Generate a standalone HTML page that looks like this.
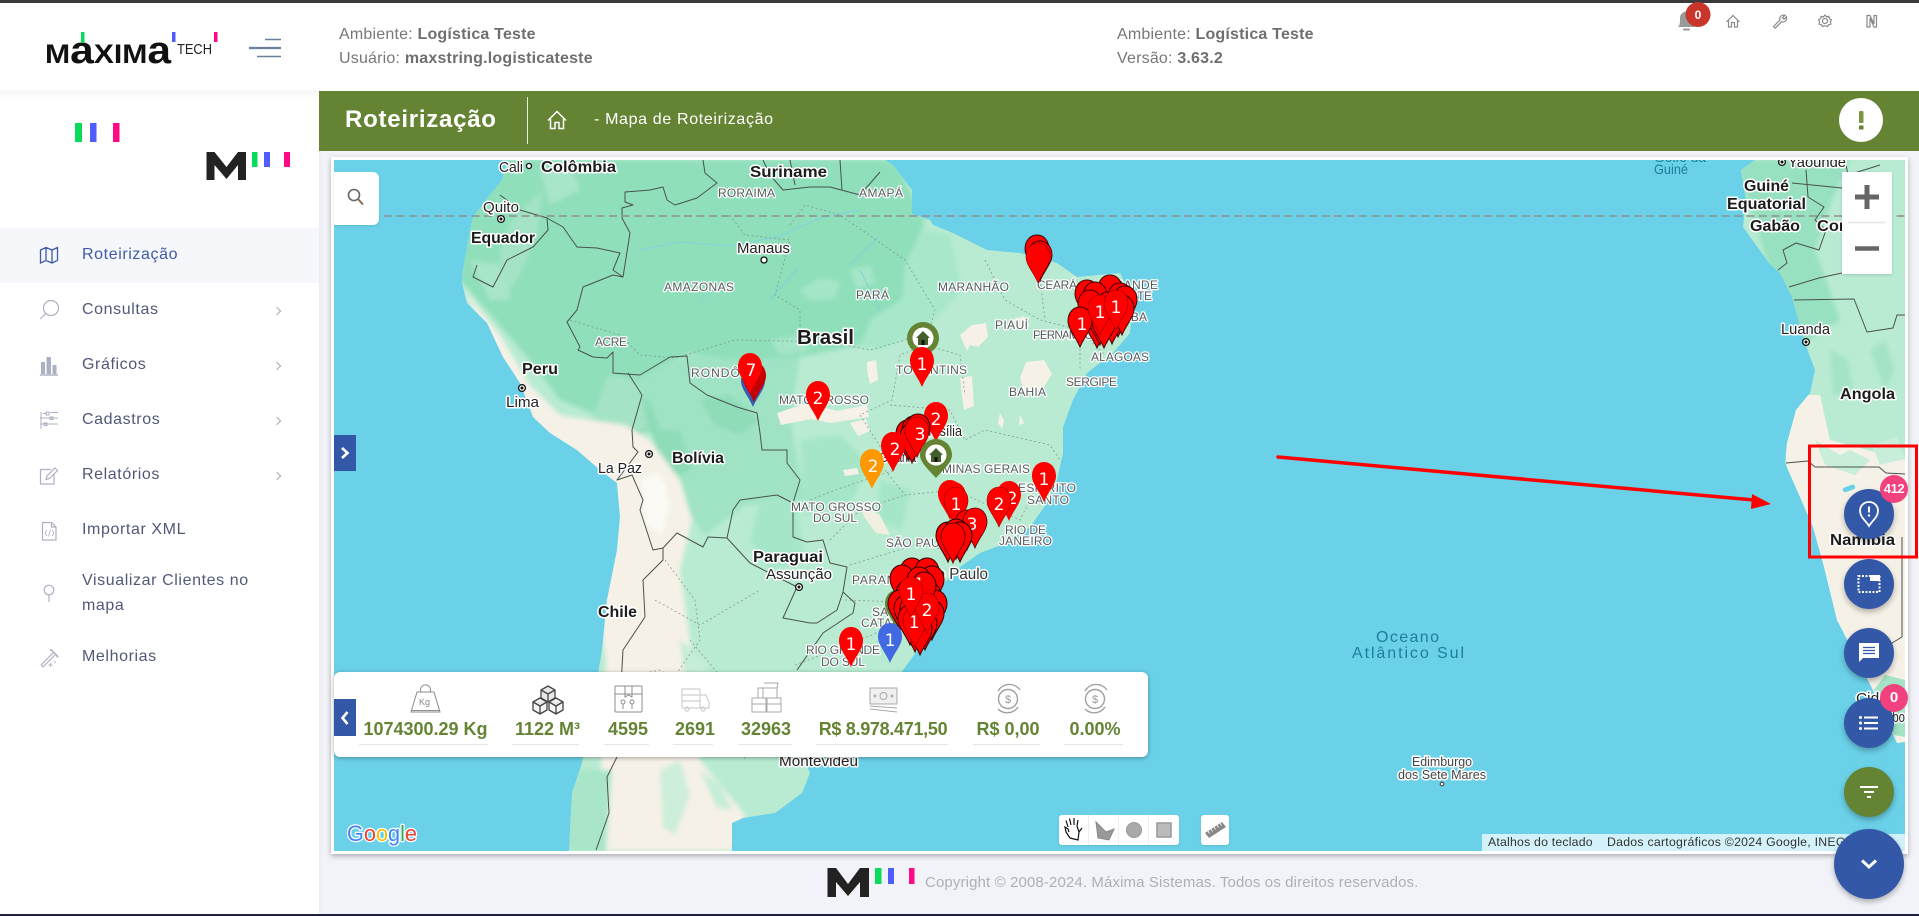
<!DOCTYPE html>
<html lang="pt-BR">
<head>
<meta charset="utf-8">
<title>Roteirização - Mapa de Roteirização</title>
<style>
*{box-sizing:border-box;margin:0;padding:0}
html,body{width:1919px;height:916px;overflow:hidden;background:#f1f3f9;font-family:"Liberation Sans",sans-serif}
.abs,.abs>*{position:absolute}
#top{left:0;top:0;width:1919px;height:91px;background:#fff;border-top:3px solid #3a3a3c}
#bottom{left:0;top:914px;width:1919px;height:2px;background:#1f2143}
#side{left:0;top:91px;width:319px;height:823px;background:#fff;box-shadow:inset 0 8px 8px -6px rgba(0,0,0,.06),2px 0 5px rgba(0,0,0,.03)}
.m{position:absolute;left:82px;font-size:16px;color:#515878;letter-spacing:.6px;white-space:nowrap;line-height:20px}
.chev{position:absolute;left:274px;width:6px;height:6px;border-top:1px solid #a5a8b5;border-right:1px solid #a5a8b5;transform:rotate(45deg)}
.h{position:absolute;font-size:16px;color:#777;white-space:nowrap;line-height:20px;letter-spacing:.2px}
.h b{color:#6f6f6f}
#bar{left:319px;top:91px;width:1600px;height:60px;background:#648434}
.white-frame{position:absolute;left:331px;top:157px;width:1577px;height:697px;background:#fff;box-shadow:0 2px 5px rgba(0,0,0,.3)}
#map{position:absolute;left:334px;top:160px;width:1571px;height:691px;overflow:hidden}
.lb{font-family:"Liberation Sans",sans-serif;paint-order:stroke;stroke:#fff;stroke-width:3px;stroke-linejoin:round;fill:#222;font-size:15px}
.bd{font-weight:700;font-size:16px;fill:#1c1c1c}
.st{font-size:12px;fill:#555b5d;stroke-width:2.5px}
.oc{fill:#1b7f9d;stroke:none;font-size:16px}
.n{font-family:"DejaVu Sans",sans-serif;font-size:17px;fill:#fff;text-anchor:middle}
.box{position:absolute;background:#fff}
#panel{position:absolute;left:334px;top:672px;width:814px;height:85px;background:#fff;border-radius:6px;box-shadow:0 1px 4px rgba(0,0,0,.35)}
.v{position:absolute;top:719px;height:20px;line-height:20px;font-size:18px;font-weight:700;color:#648434;white-space:nowrap;text-align:center}
.u{position:absolute;top:744px;height:1px;background:#e6e6e6}
.fab{position:absolute;border-radius:50%;background:#3458a8;box-shadow:0 3px 6px rgba(0,0,0,.28);display:flex;align-items:center;justify-content:center}
.bdg{position:absolute;width:28px;height:28px;border-radius:50%;background:#f2417f;color:#fff;font-weight:700;font-size:14px;line-height:28px;text-align:center}
.attr{position:absolute;top:834px;height:17px;background:rgba(255,255,255,.7);font-size:12.3px;line-height:17px;color:#333;white-space:nowrap}
</style>
</head>
<body>
<div id="top" style="position:absolute"></div>

<!-- header logo -->
<svg style="position:absolute;left:0;top:0" width="320" height="91" viewBox="0 0 320 91">
<text x="45" y="63" font-family="Liberation Sans" font-weight="700" font-size="27" fill="#111" textLength="126" lengthAdjust="spacingAndGlyphs">M<tspan font-size="38">a</tspan>XIM<tspan font-size="38">a</tspan></text>
<rect x="81" y="32" width="3.5" height="11" fill="#0adb5c"/>
<rect x="172" y="32" width="3.5" height="10" fill="#4f5cff"/>
<rect x="214" y="32" width="3.5" height="10" fill="#ff0a84"/>
<text x="177" y="54" font-family="Liberation Sans" font-size="15" fill="#222" textLength="35" lengthAdjust="spacingAndGlyphs">TECH</text>
<path d="M265 39.500H281M257 56.500H281" stroke="#6b8096" stroke-width="1.500" fill="none"/>
<path d="M249 48H281" stroke="#6b8096" stroke-width="2.200"/>
</svg>
<div class="h" style="left:339px;top:25px">Ambiente: <b>Logística Teste</b></div>
<div class="h" style="left:339px;top:49px">Usuário: <b>maxstring.logisticateste</b></div>
<div class="h" style="left:1117px;top:25px">Ambiente: <b>Logística Teste</b></div>
<div class="h" style="left:1117px;top:49px">Versão: <b>3.63.2</b></div>

<!-- top icons -->
<svg style="position:absolute;left:1660px;top:0" width="230" height="40" viewBox="1660 0 230 40">
<path d="M1678 27c2-2 2-4 2-9a6.500 6.500 0 0 1 13 0c0 5 0 7 2 9z" fill="#9a9a9a"/><rect x="1683" y="28.500" width="7" height="2" rx="1" fill="#9a9a9a"/>
<circle cx="1698" cy="14.500" r="12.500" fill="#c8352a"/>
<text x="1698" y="19" font-family="Liberation Sans" font-weight="700" font-size="12" fill="#fff" text-anchor="middle">0</text>
<g fill="none" stroke="#8a8a8a" stroke-width="1.200">
<path d="M1726.500 22L1733 15.500L1739.500 22M1728.500 20.500V27H1731.500V22.500H1734.500V27H1737.500V20.500"/>
<path d="M1773.500 26.500L1780 20c-1-3 1.500-5.500 5-4.800l-2.500 2.500 1.500 1.500 2.500-2.500c.7 3.500-1.800 6-4.800 5l-6.500 6.500z"/>
<circle cx="1825" cy="21" r="2.500"/><path d="M1825 15l1.500 1.800 2.300-.5.700 2.200 2 1.500-1.200 1.700.7 2.300-2.300.5-1.200 2-2.500-.8-2.500.8-1.200-2-2.300-.5.700-2.300-1.200-1.700 2-1.500.7-2.200 2.300.5z"/>
<path d="M1867 15.500H1870L1874 24V15.500H1876.500V27H1874L1870 18V27H1867Z"/>
</g>
</svg>

<!-- sidebar -->
<div id="side" style="position:absolute"></div>
<div style="position:absolute;left:0;top:228px;width:319px;height:55px;background:#f6f7fa"></div>
<svg style="position:absolute;left:0;top:91px" width="319" height="600" viewBox="0 91 319 600">
<rect x="75" y="123" width="7" height="19" fill="#0adb5c"/><rect x="90" y="123" width="6.500" height="19" fill="#4f5cff"/><rect x="113" y="123" width="6.500" height="19" fill="#ff0a84"/>
<path d="M206.500 180V152H214.500L226.500 167L238 152H246V180H238V165L226.500 179L214.500 165V180Z" fill="#222"/>
<rect x="252" y="152" width="5.500" height="15" fill="#0adb5c"/><rect x="264" y="152" width="6" height="15" fill="#4f5cff"/><rect x="284" y="152" width="6" height="15" fill="#ff0a84"/>
<path d="M40.500 250L46 247.500L52 250L57.500 247.500V260.500L52 263L46 260.500L40.500 263ZM46 247.500V260.500M52 250V263" fill="none" stroke="#3f5aa8" stroke-width="1.300"/>
<g fill="none" stroke="#adb0c4" stroke-width="1.200">
<circle cx="51" cy="308" r="7.500"/><path d="M45.500 313.500L40.500 319"/>
<path d="M40 375H58" stroke-width="1.500"/>
<path d="M50 412.500H58M40 418H58M40 424H58M41 412V429M43 413.500H47M46 412h3v3h-3zM50 417h3v2.500h-3zM44 423h3v2.500h-3z" stroke-width="1"/>
<path d="M54 474V484H40.500V469.500H51"/><path d="M46 479.500L47 476L55 468L57.500 470.500L49.500 478.500Z"/>
<path d="M42.500 522.500H51.500L56 527V540H42.500ZM51.500 522.500V527H56"/><path d="M47 530L45 533L47 536M52 530L54 533L52 536M50.500 529.500L48.500 536.500" stroke-width=".8"/>
<circle cx="49" cy="590" r="4.800"/><path d="M49 595V602"/>
<path d="M41 665L53 653M43 667L55 655M41 665L43 667M52 651l5 5M50 651l1-1.500 7 7-1.500 1"/><path d="M50.500 663v4M48.500 665h4M55 661v2" stroke-width=".9"/>
</g>
<g fill="#adb0c4"><rect x="41" y="362" width="4" height="12"/><rect x="46.500" y="357" width="4.500" height="17"/><rect x="52.500" y="365" width="4" height="9"/></g>
</svg>
<div class="m" style="top:245px;color:#3f5aa8">Roteirização</div>
<div class="m" style="top:300px">Consultas</div>
<div class="m" style="top:355px">Gráficos</div>
<div class="m" style="top:410px">Cadastros</div>
<div class="m" style="top:465px">Relatórios</div>
<div class="m" style="top:520px">Importar XML</div>
<div class="m" style="top:571px">Visualizar Clientes no</div>
<div class="m" style="top:596px">mapa</div>
<div class="m" style="top:647px">Melhorias</div>
<span class="chev" style="top:308px"></span><span class="chev" style="top:363px"></span><span class="chev" style="top:418px"></span><span class="chev" style="top:473px"></span>

<!-- green bar -->
<div id="bar" style="position:absolute"></div>
<div style="position:absolute;left:345px;top:105px;font-size:24px;line-height:30px;font-weight:700;color:#fff;white-space:nowrap;letter-spacing:.75px">Roteirização</div>
<div style="position:absolute;left:527px;top:97px;width:1px;height:47px;background:#e5ecd8"></div>
<svg style="position:absolute;left:546px;top:109px" width="22" height="22" viewBox="546 109 22 22"><path d="M548 120.500L557 111.500L566 120.500M550.500 119V128.500H555V122.500H559V128.500H563.500V119" fill="none" stroke="#fff" stroke-width="1.500"/></svg>
<div style="position:absolute;left:594px;top:110px;font-size:16px;line-height:20px;color:#fff;white-space:nowrap;letter-spacing:.65px">- Mapa de Roteirização</div>
<div style="position:absolute;left:1839px;top:98px;width:44px;height:44px;border-radius:50%;background:#fff"></div>
<svg style="position:absolute;left:1855px;top:108px" width="12" height="24" viewBox="0 0 12 24"><rect x="4" y="3" width="4.500" height="12" rx="1" fill="#7a9440"/><rect x="4" y="17.500" width="4.500" height="4" fill="#648434"/></svg>

<!-- map -->
<div class="white-frame"></div>
<div id="map">
<svg width="1571" height="691" viewBox="334 160 1571 691" style="display:block">
<defs>
<path id="p" d="M0 0C-7 0-12 6-12 14C-12 22-4 30 0 40C4 30 12 22 12 14C12 6 7 0 0 0Z"/>
<clipPath id="sa"><path d="M507 160L502 180L490 195L473 217L470 230L467 247L463 270L462 283L467 303L487 323L503 357L520 383L533 417L550 433L577 450L600 470L617 483L620 517L617 550L607 600L602 650L590 720L582 763L572 793L569 851L732 851L732 823L743 818L775 813L802 793L810 773L800 750L830 740L880 700L903 670L920 647L940 610L940 587L960 567L980 553L1007 543L1030 527L1047 503L1057 480L1063 453L1063 427L1073 400L1087 373L1113 353L1130 333L1133 300L1120 273L1077 277L1057 263L1020 253L987 250L953 233L933 225L930 220L912 214L912 190L893 165L885 160Z"/></clipPath>
<clipPath id="af"><path d="M1755 160L1741 170L1746 200L1743 227L1769 263L1780 273L1792 297L1805 343L1815 370L1810 393L1796 410L1787 443L1785 463L1800 497L1813 527L1823 563L1837 620L1873 690L1897 743L1905 742L1905 160Z"/></clipPath>
<filter id="soft" x="-5%" y="-5%" width="110%" height="110%"><feGaussianBlur stdDeviation="2.500"/></filter>
</defs>
<rect x="334" y="160" width="1571" height="691" fill="#6ad1e8"/>

<g clip-path="url(#sa)">
<rect x="334" y="160" width="900" height="691" fill="#b8ebd2"/>
<g filter="url(#soft)">
<path d="M640 378L690 355L800 355L790 420L805 500L745 505L705 535L680 500L662 430L610 420Z" fill="#9fe3c4"/>
<path d="M902 225L950 235L962 290L925 330L880 350L855 345L870 318L905 265Z" fill="#a8e7ca"/>
<path d="M800 440l40-5 30 30-20 40-45 10zM760 500l35 0 10 60-35 10-20-30zM880 480l30 10-8 40-25-10z" fill="#a6e6c8"/>
<path d="M500 160H895L925 222L905 265L902 300L872 318L860 345L800 357L740 360L690 353L640 378L642 420L610 420L560 400L530 360L495 320L460 280L465 210Z" fill="#8fdfba"/>
<path d="M620 395l30 5 10 30-25 5zM700 400l30-5 30 25-20 15-25-10zM650 430l30 0 12 40-25 10z" fill="#8fdcb8"/>
<path d="M800 290l20-12 20 4-5 16-25 3zM850 270l20-5 5 18-18 6zM770 340l30-5 10 15-30 5z" fill="#a5e6c8"/>
<path d="M500 250l12-30 30-30-4 40-14 36-20 35zM590 425l18-50 30 5 10 50z" fill="#a4e3c5"/>
<path d="M540 170l30-5 10 25-30 15zM470 260l30 5 10 35-20 0z" fill="#a9e5c9"/>
<!-- beige south / west coast -->
<path d="M460 285L500 335L530 385L560 415L590 420L625 425L650 440L680 480L692 520L680 570L690 640L700 700L700 760L745 815L732 851L606 851L600 790L606 660L590 560L610 500L560 470Z" fill="#f5f1e6"/>
<path d="M640 480l18-6 12 30-8 30-16-10zM655 470l12 18-8 18-14-12z" fill="#fbfaf5"/>
<path d="M565 770L612 770L606 851L565 851Z" fill="#a9e6c9"/>
<path d="M660 770l20-10 10 35-15 40-12-8z" fill="#cdeeda"/>
<path d="M680 640l25 20 15 50-15 10-20-40zM700 770l20 15 12 25-15-2z" fill="#c5edd7"/>
</g>
<!-- beige spots Brazil -->
<path d="M960 335l12-10 14-2 2 14-10 10-8-2-3 6zM1020 378l6-16 18-2 8 14-10 16-18 2zM960 378l12-2 2 30-10 4-2-14zM867 362l9-2 2 20-8 4-3-14zM777 413l30-10 30 8 30-6 2 12-38 6-20-4-30 6zM850 423l16-4 4 12-12 5zM843 470l14-2 2 6-14 2zM1000 413l4 8-2 8-4-6zM1020 415l4 8-5 2z" fill="#f5f1e6"/>
<path d="M860 505l20 10 10 20-14-2-12-16zM1010 320l14-4 6 10-16 4z" fill="#f0efe0"/>
<path d="M640 250l40-8 50 4 50-10 40-18 40-8M700 300l20-14M770 300l28-32M850 265l30-30M860 270l20 40" stroke="#7fd5dc" stroke-width="1" fill="none"/>
</g>
<g clip-path="url(#af)">
<rect x="1730" y="160" width="180" height="600" fill="#b8ebd2"/>
<g filter="url(#soft)">
<path d="M1735 160H1850L1830 205L1815 250L1840 320L1800 345L1770 270Z" fill="#98e1c0"/>
<path d="M1870 350l15-10 10 30-10 20zM1830 350l18 10 5 30-20 5z" fill="#a4e3c5"/>
</g>
<path d="M1780 395L1820 395L1830 440L1905 460L1905 760L1860 700L1820 600L1790 500Z" fill="#f5f1e6"/>
<path d="M1815 440l25 15 10-5 20 10-15 15-30-10zM1872 445l25-8 8 22-25 6z" fill="#c8eeda"/>
<path d="M1874 690l20 45 11 2V680l-20-5z" fill="#a4e3c5"/>
<rect x="1843" y="486" width="13" height="5" rx="2.500" fill="#6ad1e8" transform="rotate(-20 1849 490)"/>
</g>

<!-- dashed state borders -->
<g fill="none" stroke="#7d8a85" stroke-width=".9" stroke-dasharray="2 2.500" opacity=".75">
<path d="M570 320L620 335L640 355L675 358L735 340L830 342L870 350L905 340L925 325"/>
<path d="M730 215L745 235L790 240L775 295L800 310L800 330M790 225L805 205L840 215L905 260L935 310L925 345"/>
<path d="M925 345L900 355L892 400L860 415L895 470L835 490L810 500M890 405L950 410L965 440L985 430L1050 445L1060 460"/>
<path d="M985 260L1005 300L1040 320L1080 330L1105 355M1040 280L1045 320M1080 335L1080 370M925 345L960 355L965 395"/>
<path d="M885 470L905 495L955 490L1020 520L1040 480M830 540L860 510L905 495M850 565L915 545L950 550M845 600L900 602M795 665L860 640L895 625"/>
<path d="M665 560L695 600L700 640L665 690L650 700M655 600L700 625L760 590M690 640L740 700L745 760M610 680L660 670L690 690L692 710"/>
</g>
<!-- country borders -->
<g fill="none" stroke="#4a514f" stroke-width="1" stroke-linejoin="round">
<path d="M500 195L520 210L547 218L548 230L533 247L507 260L493 287L473 277L477 265"/>
<path d="M547 218L563 227L577 247L597 248L620 253L613 270L623 277L630 233L622 218L622 208L633 205L625 202L625 192L650 190L663 187L667 200L675 205L697 198L717 183L705 173L703 160"/>
<path d="M623 277L613 275L583 287L577 310L567 322L580 347L578 350L593 357L607 358L613 352L613 373L640 375L670 357L687 356L690 383L707 395L737 407L757 413L760 433L762 450L787 450L787 463L800 480L793 503L793 537L807 542L823 540L830 563L847 567L843 592L855 603L853 613L823 633L797 670"/>
<path d="M628 373L642 395L632 430L633 447L638 452L617 480L632 475L643 500L640 510L653 550L663 548L677 533L703 547L708 537L727 538L733 510L740 500L777 495L793 503"/>
<path d="M727 538L750 563L797 587L783 618L810 623L817 623L837 610L843 592"/>
<path d="M663 548L663 560L643 580L645 617L623 650L617 757L607 777L609 813L596 850"/>
<path d="M763 160L770 175L783 190L810 187L830 187L860 195L880 172M790 160L795 185M840 160L842 190"/>
<path d="M1792 183L1842 188M1806 170L1808 197L1824 207L1815 220L1826 230L1819 250L1796 243L1783 250L1787 263L1778 270M1789 287L1819 278L1842 273M1794 300L1854 299L1867 332L1893 328L1897 315L1905 315M1845 160L1848 175L1880 165M1786 463L1808 461L1815 467L1879 467L1886 473L1905 474M1902 537V637L1892 643L1885 650"/>
</g>
<path d="M334 216H1905" stroke="#8f8f8f" stroke-width="1.600" stroke-dasharray="8 4.500"/>

<!-- markers -->
<g fill="#fff" stroke="#111" stroke-width="1.300">
<circle cx="529" cy="166" r="2.500"/><circle cx="764" cy="260" r="3"/><circle cx="1442" cy="784" r="1.800" stroke="#555"/>
<circle cx="501" cy="219" r="3.400"/><circle cx="522" cy="388" r="3.400"/><circle cx="649" cy="454" r="3.400"/><circle cx="799" cy="587" r="3.400"/><circle cx="1782" cy="162" r="3.400"/><circle cx="1806" cy="342" r="3.400"/>
</g>
<g fill="#111"><circle cx="501" cy="219" r="1.500"/><circle cx="522" cy="388" r="1.500"/><circle cx="649" cy="454" r="1.500"/><circle cx="799" cy="587" r="1.500"/><circle cx="1782" cy="162" r="1.500"/><circle cx="1806" cy="342" r="1.500"/></g>

<!-- labels -->
<text class="lb" x="499" y="172" textLength="24" lengthAdjust="spacingAndGlyphs" font-size="14">Cali</text>
<text class="lb bd" x="541" y="172" textLength="75" lengthAdjust="spacingAndGlyphs">Colômbia</text>
<text class="lb bd" x="750" y="177" textLength="77" lengthAdjust="spacingAndGlyphs">Suriname</text>
<text class="lb" x="483" y="212" textLength="36" lengthAdjust="spacingAndGlyphs">Quito</text>
<text class="lb bd" x="471" y="243" textLength="64" lengthAdjust="spacingAndGlyphs">Equador</text>
<text class="lb" x="737" y="253" textLength="53" lengthAdjust="spacingAndGlyphs">Manaus</text>
<text class="lb st" x="664" y="291" textLength="70">AMAZONAS</text>
<text class="lb st" x="718" y="197" textLength="57">RORAIMA</text>
<text class="lb st" x="859" y="197" textLength="44">AMAPÁ</text>
<text class="lb st" x="595" y="346" textLength="32">ACRE</text>
<text class="lb bd" x="522" y="374" textLength="36" lengthAdjust="spacingAndGlyphs">Peru</text>
<text class="lb" x="506" y="407" textLength="33" lengthAdjust="spacingAndGlyphs">Lima</text>
<text class="lb" x="598" y="473" textLength="44" lengthAdjust="spacingAndGlyphs">La Paz</text>
<text class="lb bd" x="672" y="463" textLength="52" lengthAdjust="spacingAndGlyphs">Bolívia</text>
<text class="lb bd" x="598" y="617" textLength="39" lengthAdjust="spacingAndGlyphs">Chile</text>
<text class="lb bd" x="753" y="562" textLength="70" lengthAdjust="spacingAndGlyphs">Paraguai</text>
<text class="lb" x="766" y="579" textLength="66" lengthAdjust="spacingAndGlyphs">Assunção</text>
<text class="lb st" x="691" y="377" textLength="72">RONDÔNIA</text>
<text class="lb bd" x="797" y="344" textLength="57" lengthAdjust="spacingAndGlyphs" style="font-size:20px">Brasil</text>
<text class="lb st" x="856" y="299" textLength="33">PARÁ</text>
<text class="lb st" x="938" y="291" textLength="71">MARANHÃO</text>
<text class="lb st" x="995" y="329" textLength="33">PIAUÍ</text>
<text class="lb st" x="1037" y="289" textLength="40">CEARÁ</text>
<text class="lb st" x="1105" y="289" textLength="53">GRANDE</text>
<text class="lb st" x="1112" y="300" textLength="40">NORTE</text>
<text class="lb st" x="1095" y="321" textLength="52">PARAÍBA</text>
<text class="lb st" x="1033" y="339" textLength="76">PERNAMBUCO</text>
<text class="lb st" x="1091" y="361" textLength="58">ALAGOAS</text>
<text class="lb st" x="1066" y="386" textLength="51">SERGIPE</text>
<text class="lb st" x="1009" y="396" textLength="37">BAHIA</text>
<text class="lb st" x="896" y="374" textLength="71">TOCANTINS</text>
<text class="lb st" x="779" y="404" textLength="90">MATO GROSSO</text>
<text class="lb" x="920" y="436" textLength="42" lengthAdjust="spacingAndGlyphs" font-size="14">Brasília</text>
<text class="lb" x="880" y="462" textLength="36" lengthAdjust="spacingAndGlyphs" font-size="14">Goiânia</text>
<text class="lb st" x="942" y="473" textLength="88">MINAS GERAIS</text>
<text class="lb st" x="1018" y="492" textLength="58">ESPÍRITO</text>
<text class="lb st" x="1027" y="504" textLength="42">SANTO</text>
<text class="lb st" x="1005" y="534" textLength="41">RIO DE</text>
<text class="lb st" x="999" y="545" textLength="53">JANEIRO</text>
<text class="lb st" x="791" y="511" textLength="90">MATO GROSSO</text>
<text class="lb st" x="813" y="522" textLength="44">DO SUL</text>
<text class="lb st" x="886" y="547" textLength="70">SÃO PAULO</text>
<text class="lb" x="918" y="579" textLength="70" lengthAdjust="spacingAndGlyphs" style="fill:#333;font-size:16px">São Paulo</text>
<text class="lb st" x="852" y="584" textLength="52">PARANÁ</text>
<text class="lb st" x="872" y="616" textLength="40">SANTA</text>
<text class="lb st" x="861" y="627" textLength="60">CATARINA</text>
<text class="lb st" x="806" y="654" textLength="74">RIO GRANDE</text>
<text class="lb st" x="821" y="666" textLength="44">DO SUL</text>
<text class="lb" x="779" y="766" textLength="79" lengthAdjust="spacingAndGlyphs" font-size="14">Montevideu</text>
<text class="lb oc" x="1376" y="642" textLength="63" lengthAdjust="spacing">Oceano</text>
<text class="lb oc" x="1352" y="658" textLength="112" lengthAdjust="spacing">Atlântico Sul</text>
<text class="lb" x="1412" y="766" textLength="60" lengthAdjust="spacingAndGlyphs" style="font-size:13px;fill:#444">Edimburgo</text>
<text class="lb" x="1398" y="779" textLength="88" lengthAdjust="spacingAndGlyphs" style="font-size:13px;fill:#444">dos Sete Mares</text>
<text class="lb oc" x="1654" y="162" textLength="52" lengthAdjust="spacingAndGlyphs" style="font-size:13px">Golfo da</text>
<text class="lb oc" x="1654" y="174" textLength="34" lengthAdjust="spacingAndGlyphs" style="font-size:14px">Guiné</text>
<text class="lb" x="1788" y="167" textLength="58" lengthAdjust="spacingAndGlyphs">Yaoundé</text>
<text class="lb bd" x="1744" y="191" textLength="45" lengthAdjust="spacingAndGlyphs">Guiné</text>
<text class="lb bd" x="1727" y="209" textLength="79" lengthAdjust="spacingAndGlyphs">Equatorial</text>
<text class="lb bd" x="1750" y="231" textLength="50" lengthAdjust="spacingAndGlyphs">Gabão</text>
<text class="lb bd" x="1817" y="231" textLength="52" lengthAdjust="spacingAndGlyphs">Congo</text>
<text class="lb" x="1781" y="334" textLength="49" lengthAdjust="spacingAndGlyphs">Luanda</text>
<text class="lb bd" x="1840" y="399" textLength="55" lengthAdjust="spacingAndGlyphs">Angola</text>
<text class="lb bd" x="1830" y="545" textLength="65" lengthAdjust="spacingAndGlyphs">Namíbia</text>
<text class="lb" x="1856" y="703" textLength="49" lengthAdjust="spacingAndGlyphs" font-size="14">Cidade</text>
<text class="lb" x="1862" y="722" textLength="43" lengthAdjust="spacingAndGlyphs" font-size="14">do Cabo</text>

<!-- pins -->
<g fill="#f00">
<use href="#p" x="753" y="367" fill="#3a5ab0"/>
<use href="#p" x="754" y="362" fill="#c40000"/>
<use href="#p" x="750" y="353"/><text class="n" x="751" y="376">7</text>
<use href="#p" x="818" y="381"/><text class="n" x="818" y="404">2</text>
<circle cx="923" cy="338" r="16" fill="#648434"/><circle cx="923" cy="338" r="10.500" fill="#fff"/>
<path d="M916 338L923 331L930 338H928V345H918V338Z" fill="#44602a"/><rect x="921.500" y="340" width="3" height="5" fill="#111"/>
<use href="#p" x="922" y="347"/><text class="n" x="922" y="370">1</text>
<use href="#p" x="936" y="402"/><text class="n" x="936" y="425">2</text>
<g stroke="#300" stroke-width="1">
<use href="#p" x="908" y="420"/><use href="#p" x="914" y="416"/><use href="#p" x="918" y="414"/><use href="#p" x="912" y="423"/>
<use href="#p" x="917" y="417" stroke="#a00"/>
</g><text class="n" x="920" y="440">3</text>
<use href="#p" x="893" y="432"/><text class="n" x="895" y="455">2</text>
<use href="#p" x="872" y="449" fill="#ff9800"/><text class="n" x="873" y="472">2</text>
<path d="M936 478C931 472 920 463 920 455a16 16 0 0 1 32 0c0 8-11 17-16 23Z" fill="#648434"/><circle cx="936" cy="455" r="10.500" fill="#fff"/>
<path d="M929 455L936 448L943 455H941V462H931V455Z" fill="#44602a"/><rect x="934.500" y="457" width="3" height="5" fill="#111"/>
<use href="#p" x="1044" y="462"/><text class="n" x="1044" y="485">1</text>
<use href="#p" x="1009" y="481"/><text class="n" x="1012" y="504">2</text>
<use href="#p" x="999" y="487" stroke="#900" stroke-width=".6"/><text class="n" x="999" y="510">2</text>
<use href="#p" x="950" y="480"/><use href="#p" x="954" y="482"/>
<use href="#p" x="956" y="487" stroke="#900" stroke-width=".6"/><text class="n" x="956" y="510">1</text>
<g stroke="#500" stroke-width=".8"><use href="#p" x="967" y="510"/><use href="#p" x="975" y="508"/></g><text class="n" x="972" y="530">3</text>
<g stroke="#200" stroke-width="1"><use href="#p" x="948" y="522"/><use href="#p" x="956" y="519"/><use href="#p" x="960" y="522"/><use href="#p" x="953" y="523" stroke="#700"/></g>
<g stroke="#300" stroke-width=".9"><use href="#p" x="1037" y="235"/><use href="#p" x="1040" y="241"/></g>
<use href="#p" x="1038" y="243" stroke="#900" stroke-width=".6"/>
<g stroke="#400" stroke-width="1">
<use href="#p" x="1110" y="275"/><use href="#p" x="1087" y="280"/><use href="#p" x="1095" y="282"/><use href="#p" x="1120" y="283"/><use href="#p" x="1125" y="286"/><use href="#p" x="1090" y="290"/>
<use href="#p" x="1108" y="292"/><use href="#p" x="1118" y="297"/><use href="#p" x="1097" y="308"/><use href="#p" x="1107" y="302"/><use href="#p" x="1112" y="304"/><use href="#p" x="1122" y="295"/><use href="#p" x="1100" y="305"/><use href="#p" x="1104" y="308"/>
<use href="#p" x="1080" y="307"/></g>
<text class="n" x="1082" y="330">1</text>
<use href="#p" x="1100" y="295" stroke="#900" stroke-width=".6"/><text class="n" x="1100" y="318">1</text>
<use href="#p" x="1116" y="290" stroke="#900" stroke-width=".6"/><text class="n" x="1116" y="313">1</text>
<use href="#p" x="897" y="590" fill="#648434"/>
<g stroke="#300" stroke-width="1">
<use href="#p" x="912" y="558"/><use href="#p" x="927" y="558"/><use href="#p" x="902" y="565"/><use href="#p" x="932" y="566"/><use href="#p" x="908" y="580"/>
<use href="#p" x="929" y="582"/><use href="#p" x="935" y="590"/><use href="#p" x="922" y="585"/><use href="#p" x="900" y="590"/><use href="#p" x="906" y="595"/><use href="#p" x="912" y="595"/><use href="#p" x="932" y="600"/><use href="#p" x="925" y="610"/><use href="#p" x="915" y="612"/><use href="#p" x="919" y="603"/><use href="#p" x="910" y="605"/><use href="#p" x="920" y="615"/>
<use href="#p" x="919" y="567"/><use href="#p" x="924" y="572"/></g>
<text class="n" x="919" y="590">1</text>
<use href="#p" x="915" y="607" stroke="#900" stroke-width=".6"/><text class="n" x="914" y="628">1</text>
<use href="#p" x="927" y="593" stroke="#900" stroke-width=".6"/><text class="n" x="927" y="616">2</text>
<use href="#p" x="911" y="577" stroke="#900" stroke-width=".6"/><text class="n" x="911" y="600">1</text>
<use href="#p" x="890" y="623" fill="#4169e1"/><text class="n" x="890" y="646">1</text>
<use href="#p" x="851" y="627"/><text class="n" x="851" y="650">1</text>
</g>

<!-- Google logo -->
<g font-family="Liberation Sans" font-size="22" font-weight="400" style="paint-order:stroke" stroke="#fff" stroke-width="2.500" stroke-linejoin="round">
<text x="347" y="841" textLength="70" lengthAdjust="spacingAndGlyphs"><tspan fill="#4285f4">G</tspan><tspan fill="#ea4335">o</tspan><tspan fill="#fbbc05">o</tspan><tspan fill="#4285f4">g</tspan><tspan fill="#34a853">l</tspan><tspan fill="#ea4335">e</tspan></text>
</g>
</svg>
</div>

<!-- search -->
<div class="box" style="left:334px;top:172px;width:45px;height:53px;border-radius:0 6px 6px 0;box-shadow:0 1px 2px rgba(0,0,0,.1)"></div>
<svg style="position:absolute;left:346px;top:187px" width="20" height="20" viewBox="0 0 20 20"><circle cx="8" cy="8" r="5.500" fill="none" stroke="#666" stroke-width="1.600"/><path d="M12 12L17 17.500" stroke="#8a6a50" stroke-width="2"/></svg>
<!-- left tab -->
<div style="position:absolute;left:334px;top:435px;width:22px;height:36px;background:#3458a8"></div>
<svg style="position:absolute;left:338px;top:443px" width="14" height="20" viewBox="0 0 14 20"><path d="M4 5L9.500 10L4 15" fill="none" stroke="#fff" stroke-width="2.600"/></svg>
<!-- zoom controls -->
<div class="box" style="left:1842px;top:172px;width:50px;height:102px;box-shadow:0 1px 3px rgba(0,0,0,.15)"></div>
<svg style="position:absolute;left:1842px;top:172px" width="50" height="102" viewBox="0 0 50 102"><path d="M13 25H37M25 13V37" stroke="#666" stroke-width="5"/><path d="M6 50.500H44" stroke="#e6e6e6" stroke-width="1.500"/><path d="M13 76.500H37" stroke="#666" stroke-width="4.500"/></svg>

<!-- bottom stats panel -->
<div id="panel"></div>
<div style="position:absolute;left:334px;top:699px;width:22px;height:37px;background:#3458a8"></div>
<svg style="position:absolute;left:338px;top:708px" width="14" height="20" viewBox="0 0 14 20"><path d="M9.500 4L4.500 10L9.500 16" fill="none" stroke="#fff" stroke-width="2.600"/></svg>

<svg style="position:absolute;left:340px;top:680px" width="800" height="40" viewBox="340 680 800 40">
<g fill="none" stroke="#8c8c8c" stroke-width="1">
<path d="M417 692L411 712H440L434 692ZM421 692a5 5 0 1 1 9 0M411 710.500H440"/>
<text x="419" y="705" font-family="Liberation Sans" font-size="9" fill="#888" stroke="none">Kg</text>
<rect x="615" y="686" width="27" height="26" rx="1"/><path d="M615 694H642M625 686V697L628.500 695L632 697V686"/><circle cx="623" cy="702" r="2"/><circle cx="632" cy="702" r="2"/><path d="M623 704V709M632 704V709"/>
<g stroke="#cfcfcf" stroke-width="1.200"><rect x="682" y="689" width="18" height="19" rx="1"/><path d="M700 695H706L709 702V708H700M682 695H700M682 701H700"/><circle cx="687" cy="709" r="2"/><circle cx="703" cy="709" r="2"/></g>
<g stroke="#a8a8a8"><rect x="752" y="698" width="14" height="14"/><rect x="767" y="698" width="14" height="14"/><path d="M758 698V688H777V698M763 688V698M752 704H781M764 683H778L777 688"/></g>
<g stroke="#a8a8a8"><rect x="870" y="688" width="27" height="16" fill="#f0f0f0"/><circle cx="883.500" cy="696" r="3.500"/><circle cx="875" cy="696" r="1"/><circle cx="892" cy="696" r="1"/><path d="M870 706L897 708M870 709L897 712"/></g>
<g stroke="#a0a0a0" stroke-width="1.400"><circle cx="1008" cy="699" r="9.500"/><path d="M998 691a13 13 0 0 1 22-1M1018 707a13 13 0 0 1-20 2"/></g>
<text x="1008" y="703" font-family="Liberation Sans" font-size="11" fill="#999" stroke="none" text-anchor="middle">$</text>
<g stroke="#a0a0a0" stroke-width="1.400"><circle cx="1095" cy="699" r="9.500"/><path d="M1085 691a13 13 0 0 1 22-1M1105 707a13 13 0 0 1-20 2"/></g>
<text x="1095" y="703" font-family="Liberation Sans" font-size="11" fill="#999" stroke="none" text-anchor="middle">$</text>
</g>
<g fill="#e8e8e8" stroke="#444" stroke-width="1.300" stroke-linejoin="round">
<path d="M548 686L555 690V698L548 702L541 698V690Z"/><path d="M541 690L548 694L555 690M548 694V702"/>
<path d="M540 698L547 702V710L540 714L533 710V702Z" fill="#f4f4f4"/><path d="M533 702L540 706L547 702M540 706V714"/>
<path d="M556 698L563 702V710L556 714L549 710V702Z" fill="#f4f4f4"/><path d="M549 702L556 706L563 702M556 706V714"/>
</g>
</svg>

<div class="v" style="left:362px;width:127px">1074300.29 Kg</div>
<div class="v" style="left:515px;width:65px">1122 M³</div>
<div class="v" style="left:605px;width:46px">4595</div>
<div class="v" style="left:673px;width:44px">2691</div>
<div class="v" style="left:738px;width:56px">32963</div>
<div class="v" style="left:816px;width:134px;letter-spacing:-.3px">R$ 8.978.471,50</div>
<div class="v" style="left:973px;width:70px">R$ 0,00</div>
<div class="v" style="left:1064px;width:62px">0.00%</div>
<div class="u" style="left:359px;width:129px"></div>
<div class="u" style="left:512px;width:67px"></div>
<div class="u" style="left:604px;width:45px"></div>
<div class="u" style="left:673px;width:40px"></div>
<div class="u" style="left:738px;width:54px"></div>
<div class="u" style="left:816px;width:132px"></div>
<div class="u" style="left:973px;width:67px"></div>
<div class="u" style="left:1064px;width:59px"></div>

<!-- draw tools -->
<div class="box" style="left:1059px;top:815px;width:120px;height:30px;border-radius:3px;box-shadow:0 1px 2px rgba(0,0,0,.1)"></div>
<div class="box" style="left:1201px;top:815px;width:28px;height:30px;border-radius:3px;box-shadow:0 1px 2px rgba(0,0,0,.1)"></div>
<svg style="position:absolute;left:1059px;top:815px" width="170" height="30" viewBox="1059 815 170 30">
<path d="M1088.500 815V845M1118.500 815V845M1148.500 815V845" stroke="#eee"/>
<path d="M1068 827L1066 820.500M1071 825L1069.500 818.500M1074 825L1074 818M1077 826L1078 820M1079 832L1082 828M1070 838L1066 832L1065 827L1068 829L1069 832M1070 838L1078 840L1079 832L1077 826" fill="none" stroke="#111" stroke-width="1.200"/>
<path d="M1096 822L1106 832L1114 829L1109 840L1098 838Z" fill="#999" stroke="#888"/>
<circle cx="1134" cy="830" r="7.500" fill="#aaa" stroke="#999"/>
<rect x="1157" y="823" width="14" height="14" fill="#bbb" stroke="#999" stroke-width="1.500"/>
<path d="M1205 833L1222 822L1226 827L1209 838Z" fill="#888"/>
<path d="M1208 831l1.500 2.500M1211 829l1.500 2.500M1214 827l1.500 2.500M1217 825l1.500 2.500M1220 823l1.500 2.500" stroke="#fff" stroke-width=".8"/>
</svg>

<!-- attribution -->
<div class="attr" style="left:1482px;width:423px"></div>
<div class="attr" style="left:1488px;background:none;letter-spacing:.2px">Atalhos do teclado</div>
<div class="attr" style="left:1607px;background:none;letter-spacing:.25px">Dados cartográficos ©2024 Google, INEGI</div>

<!-- footer -->
<svg style="position:absolute;left:825px;top:866px" width="95" height="34" viewBox="825 866 95 34">
<path d="M827.500 897V868H836L848 884L860 868H869V897H860V882L848 896L836 882V897Z" fill="#222"/>
<rect x="875" y="868" width="6.500" height="16" fill="#0adb5c"/><rect x="888" y="868" width="6" height="16" fill="#4f5cff"/><rect x="909" y="868" width="5.500" height="16" fill="#ff0a84"/>
</svg>
<div style="position:absolute;left:925px;top:873px;font-size:15px;line-height:20px;color:#aeb0b6;white-space:nowrap;letter-spacing:.12px">Copyright © 2008-2024. Máxima Sistemas. Todos os direitos reservados.</div>

<!-- FABs -->
<div class="fab" style="left:1844px;top:489px;width:50px;height:50px">
<svg width="24" height="28" viewBox="0 0 24 28"><path d="M12 2C6.500 2 3 6 3 11C3 17 9 21 12 26C15 21 21 17 21 11C21 6 17.500 2 12 2Z" fill="none" stroke="#fff" stroke-width="1.800"/><path d="M12 6.500V12.500" stroke="#fff" stroke-width="2"/><circle cx="12" cy="15.500" r="1.200" fill="#fff"/></svg>
</div>
<div class="bdg" style="left:1880px;top:475px;font-size:13px;letter-spacing:-.4px">412</div>
<div class="fab" style="left:1844px;top:559px;width:50px;height:50px">
<svg width="24" height="20" viewBox="0 0 24 20"><rect x="1.500" y="2" width="21" height="16" fill="none" stroke="#fff" stroke-width="2" stroke-dasharray="2 1.500"/><rect x="13" y="1" width="10" height="6" fill="#fff"/></svg>
</div>
<div class="fab" style="left:1844px;top:628px;width:50px;height:50px">
<svg width="22" height="22" viewBox="0 0 22 22"><path d="M1 1H21V16H5L1 20Z" fill="#fff"/><path d="M5 5.500H17M5 8.500H17M5 11.500H17" stroke="#3458a8" stroke-width="1.200"/></svg>
</div>
<div class="fab" style="left:1844px;top:698px;width:50px;height:50px">
<svg width="20" height="16" viewBox="0 0 20 16"><path d="M5 2.500H19M5 8H19M5 13.500H19" stroke="#fff" stroke-width="2"/><circle cx="1.500" cy="2.500" r="1.500" fill="#fff"/><circle cx="1.500" cy="8" r="1.500" fill="#fff"/><circle cx="1.500" cy="13.500" r="1.500" fill="#fff"/></svg>
</div>
<div class="bdg" style="left:1880px;top:684px;font-size:15px">0</div>
<div class="fab" style="left:1844px;top:767px;width:50px;height:50px;background:#648434">
<svg width="20" height="14" viewBox="0 0 20 14"><path d="M1 2H19M5 7H15M8 12H12" stroke="#fff" stroke-width="2"/></svg>
</div>
<div class="fab" style="left:1834px;top:829px;width:70px;height:70px">
<svg width="20" height="14" viewBox="0 0 20 14"><path d="M3 3.500L10 10L17 3.500" fill="none" stroke="#fff" stroke-width="3"/></svg>
</div>

<div id="bottom" style="position:absolute"></div>

<!-- annotation -->
<svg style="position:absolute;left:0;top:0;pointer-events:none" width="1919" height="916" viewBox="0 0 1919 916">
<rect x="1809.500" y="446" width="107" height="111" fill="none" stroke="#f00" stroke-width="3"/>
<path d="M1278 457L1754 500" stroke="#f00" stroke-width="3.500" stroke-linecap="round"/>
<path d="M1752 494L1771 504L1751 509Z" fill="#f00"/>
</svg>
</body>
</html>
